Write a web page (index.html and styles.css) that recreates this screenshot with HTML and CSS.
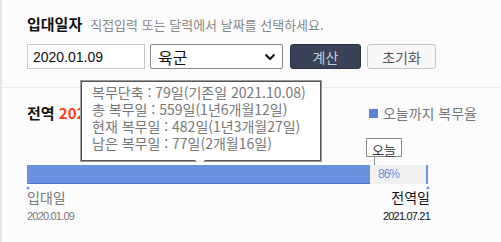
FILE: index.html
```html
<!DOCTYPE html>
<html lang="ko">
<head>
  <meta charset="UTF-8" />
  <title>전역일 계산기</title>
  <link rel="stylesheet" href="styles.css">
</head>
<body>
  <div class="page">
    <div class="input-box">
      <div class="title-row">
        <span class="title">입대일자</span>
        <span class="hint">직접입력 또는 달력에서 날짜를 선택하세요.</span>
      </div>
      <div class="form-row">
        <input class="date" type="text" value="2020.01.09">
        <div class="select">
          <span>육군</span>
          <svg width="12" height="8" viewBox="0 0 12 8"><path d="M1.5 1.5 L6 6 L10.5 1.5" fill="none" stroke="#111" stroke-width="2"/></svg>
        </div>
        <button class="btn-calc">계산</button>
        <button class="btn-reset">초기화</button>
      </div>
    </div>

    <div class="result">
      <div class="result-head">
        <span class="title">전역 <em>2021.07.21</em></span>
        <span class="legend"><i></i>오늘까지 복무율</span>
      </div>

      <div class="bar-wrap">
        <div class="today">오늘</div>
        <div class="bar">
          <div class="fill" style="width: 86%"></div>
          <span class="pct">86%</span>
        </div>
        <div class="ends">
          <div class="end start">
            <div class="name">입대일</div>
            <div class="day">2020.01.09</div>
          </div>
          <div class="end finish">
            <div class="name">전역일</div>
            <div class="day">2021.07.21</div>
          </div>
        </div>
      </div>

      <div class="tip">
        <p>복무단축 : 79일(기존일 2021.10.08)</p>
        <p>총 복무일 : 559일(1년6개월12일)</p>
        <p>현재 복무일 : 482일(1년3개월27일)</p>
        <p>남은 복무일 : 77일(2개월16일)</p>
      </div>
    </div>
  </div>
</body>
</html>
```

FILE: styles.css
```css
body {
  margin: 0;
  background: #fcfcfc;
  font-family: "Noto Sans CJK KR", "Noto Sans", sans-serif;
  color: #222;
}

.page {
  border-left: 2px solid #e6e6e6;
  min-height: 242px;
  box-sizing: border-box;
}

.input-box {
  padding: 14px 0 18px 25px;
  border-bottom: 1px solid #ececec;
}

.title-row {
  display: flex;
  align-items: baseline;
  gap: 8px;
  height: 24px;
}

.title {
  font-size: 15px;
  font-weight: bold;
  color: #111;
  line-height: 20px;
}

.hint {
  font-size: 13px;
  color: #888;
}

.form-row {
  display: flex;
  gap: 6px;
  margin-top: 6px;
  height: 25px;
}

.date {
  width: 118px;
  box-sizing: border-box;
  border: 1px solid #c8c8c8;
  background: #fff;
  padding: 0 5px;
  font-family: "Liberation Sans", sans-serif;
  font-size: 14px;
  color: #111;
}

.select {
  width: 133px;
  margin-left: -1px;
  box-sizing: border-box;
  border: 1px solid #888;
  border-radius: 2px;
  background: #fff;
  display: flex;
  align-items: center;
  justify-content: space-between;
  padding: 0 6px 0 7px;
  font-size: 16px;
  color: #111;
}

.btn-calc, .btn-reset {
  height: 25px;
  border-radius: 3px;
  font-family: "Noto Sans CJK KR", sans-serif;
  font-size: 14px;
  padding: 0;
}

.btn-calc {
  width: 71px;
  margin-left: 1px;
  border: 1px solid #2c3345;
  background: #3a4259;
  color: #c8ccd6;
}

.btn-reset {
  width: 69px;
  border: 1px solid #c4c4c4;
  background: #f8f8f8;
  color: #555;
}

.result {
  position: relative;
  padding: 15px 0 0 25px;
}

.result-head {
  display: flex;
  justify-content: space-between;
  align-items: center;
  width: 450px;
}

.result-head em {
  font-style: normal;
  color: #ff3d1a;
}

.legend {
  font-size: 14px;
  color: #777;
  display: flex;
  align-items: center;
  gap: 5px;
}

.legend i {
  width: 9px;
  height: 9px;
  background: #5a82d6;
}

.bar-wrap {
  position: relative;
  width: 401px;
  margin-top: 42px;
}

.bar {
  position: relative;
  height: 19px;
  background: #f1f1f1;
  border-right: 2px solid #6a93e0;
  box-sizing: border-box;
}

.fill {
  height: 19px;
  background: #6892e0;
  border-bottom: 1px solid #4c74c6;
  box-sizing: border-box;
}

.pct {
  position: absolute;
  left: 351px;
  top: 0;
  font-family: "Liberation Sans", sans-serif;
  font-size: 12px;
  line-height: 19px;
  color: #6a8fe0;
  letter-spacing: -1px;
}

.today {
  position: absolute;
  left: 339px;
  top: -27px;
  width: 36px;
  height: 19px;
  box-sizing: border-box;
  border: 1px solid #8a8a8a;
  background: #fff;
  font-size: 13px;
  line-height: 22px;
  text-align: center;
  color: #333;
}

.today::after {
  content: "";
  position: absolute;
  left: 7px;
  top: 17px;
  height: 10px;
  border-left: 1px solid #8a8a8a;
}

.ends {
  display: flex;
  justify-content: space-between;
  margin-top: 3px;
}

.end {
  position: relative;
}

.start::before, .finish::before {
  content: "";
  position: absolute;
  top: -1px;
  border: 2px solid transparent;
  border-top: 0;
  border-bottom: 3px solid #6a93e0;
}

.start::before {
  left: -1px;
}

.finish::before {
  right: 0;
}

.end .name {
  font-size: 14px;
  line-height: 20px;
}

.end .day {
  font-family: "Liberation Sans", sans-serif;
  font-size: 11px;
  letter-spacing: -0.8px;
  margin-top: 3px;
}

.start .name, .start .day {
  color: #777;
}

.finish {
  text-align: right;
  margin-right: -2px;
}

.finish .name, .finish .day {
  color: #111;
}

.tip {
  position: absolute;
  left: 79px;
  top: -7px;
  width: 240px;
  box-sizing: border-box;
  padding: 2px 0 8px 10px;
  background: #fff;
  border: 1px solid #555;
  box-shadow: 0 0 0 1px #999;
}

.tip::after {
  content: "";
  position: absolute;
  left: 113px;
  bottom: -5px;
  border: 5px solid transparent;
  border-bottom: 0;
  border-top-color: #fff;
}

.tip p {
  margin: 0;
  font-size: 14px;
  line-height: 17px;
  color: #777;
}
```
